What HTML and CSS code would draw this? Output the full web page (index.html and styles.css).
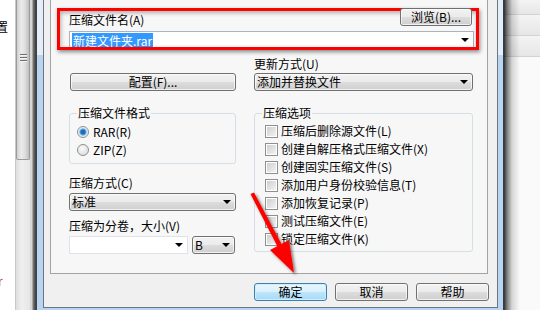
FILE: index.html
```html
<!DOCTYPE html>
<html lang="zh-CN">
<head>
  <meta charset="UTF-8">
  <title>压缩文件名和参数</title>
  <link rel="stylesheet" href="styles.css">
</head>
<body>
  <div class="behind">
    <span class="behind-text">置</span>
    <span class="behind-text orange">r</span>
  </div>
  <div class="scrollbar">
    <div class="thumb"><span class="grip"></span></div>
  </div>
  <div class="shade-left"></div>

  <div class="frame">
    <div class="client">
      <div class="tabpage">
        <div class="name-row">
          <span class="label">压缩文件名(A)</span>
          <button class="btn browse">浏览(B)...</button>
        </div>
        <div class="combo edit"><span class="sel">新建文件夹.rar</span><i class="arrow"></i></div>

        <div class="cols">
          <div class="col">
            <button class="btn profile">配置(F)...</button>
            <fieldset class="group format">
              <legend>压缩文件格式</legend>
              <div class="opt"><span class="radio on"></span>RAR(R)</div>
              <div class="opt"><span class="radio"></span>ZIP(Z)</div>
            </fieldset>
            <div class="label method">压缩方式(C)</div>
            <div class="combo list">标准<i class="arrow"></i></div>
            <div class="label volume">压缩为分卷，大小(V)</div>
            <div class="vol-row">
              <div class="combo edit size"><span></span><i class="arrow"></i></div>
              <div class="combo list unit">B<i class="arrow"></i></div>
            </div>
          </div>

          <div class="col">
            <div class="label update">更新方式(U)</div>
            <div class="combo list">添加并替换文件<i class="arrow"></i></div>
            <fieldset class="group options">
              <legend>压缩选项</legend>
              <div class="opt"><span class="check"></span>压缩后删除源文件(L)</div>
              <div class="opt"><span class="check"></span>创建自解压格式压缩文件(X)</div>
              <div class="opt"><span class="check"></span>创建固实压缩文件(S)</div>
              <div class="opt"><span class="check"></span>添加用户身份校验信息(T)</div>
              <div class="opt"><span class="check"></span>添加恢复记录(P)</div>
              <div class="opt"><span class="check"></span>测试压缩文件(E)</div>
              <div class="opt"><span class="check"></span>锁定压缩文件(K)</div>
            </fieldset>
          </div>
        </div>
      </div>

      <div class="buttons">
        <button class="btn default">确定</button>
        <button class="btn">取消</button>
        <button class="btn">帮助</button>
      </div>
    </div>
  </div>

  <div class="shade-right">
    <div class="row first"></div>
    <div class="row"></div>
    <div class="row"></div>
  </div>

  <!-- annotations drawn over the screenshot -->
  <div class="note-box"></div>
  <svg class="note-arrow" width="540" height="310" viewBox="0 0 540 310">
    <defs>
      <filter id="drop" x="-20%" y="-20%" width="140%" height="140%">
        <feDropShadow dx="2" dy="2" stdDeviation="1.5" flood-color="#000" flood-opacity="0.5"/>
      </filter>
    </defs>
    <g filter="url(#drop)" fill="#f00">
      <polygon points="250.5,194 254,192.5 282,245 278,247.5"/>
      <polygon points="294,273 270,250 289,240"/>
    </g>
  </svg>
</body>
</html>
```

FILE: styles.css
```css
* {
  margin: 0;
  padding: 0;
  box-sizing: border-box;
}
body {
  width: 540px;
  height: 310px;
  overflow: hidden;
  display: flex;
  position: relative;
  background: #fff;
  color: #000;
  font: 12px "Noto Sans CJK SC", "Liberation Sans", sans-serif;
}

/* window behind the dialog */
.behind {
  width: 15px;
  display: flex;
  flex-direction: column;
  justify-content: space-between;
  padding: 20px 0 22px;
  overflow: hidden;
}
.behind-text {
  line-height: 14px;
  margin-left: -4px;
}
.orange {
  color: #c0611c;
  margin-left: -2px;
}
.scrollbar {
  width: 15px;
  border-left: 1px solid #c9c9c9;
  background: linear-gradient(90deg, #dedede, #efefef 40%, #e6e6e6);
}
.thumb {
  height: 160px;
  border: 1px solid #9b9b9b;
  border-top: 0;
  border-radius: 0 0 2px 2px;
  background: linear-gradient(90deg, #d0d0d0, #ececec 35%, #dcdcdc 70%, #bdbdbd);
  padding-top: 54px;
  display: flex;
  justify-content: center;
}
.grip {
  width: 7px;
  height: 8px;
  background: repeating-linear-gradient(#6e6e6e 0 1px, #f4f4f4 1px 2px, transparent 2px 3px);
}
.shade-left {
  width: 7px;
  background: linear-gradient(90deg, #d6d6d6 0 2px, #7a7a7a 3px, #3a3a3a 6px, #4a4a4a);
}

/* dialog window */
.frame {
  width: 467px;
  padding: 0 5px 2px 6px;
  border-right: 1px solid #2f3b48;
  background: linear-gradient(#e4eef9 0 55px, #b8d4f1 55px);
}
.client {
  height: 309px;
  margin-top: -1px;
  border: 1px solid #6d7680;
  background: #f0f0f0;
}
.tabpage {
  width: 438px;
  height: 275px;
  margin: -1px 0 0 6px;
  border: 1px solid #a3a3a3;
  background: #f7f7f7;
  padding: 8px 13px 0 18px;
}
.label {
  line-height: 13px;
  white-space: nowrap;
}
.name-row {
  height: 18px;
  display: flex;
  justify-content: space-between;
  align-items: flex-end;
}

.btn {
  height: 18px;
  font: inherit;
  color: #000;
  line-height: 16px;
  border: 1px solid #707070;
  border-radius: 3px;
  background: linear-gradient(#f2f2f2, #ebebeb 50%, #dddddd 50%, #cfcfcf);
  box-shadow: inset 0 0 0 1px rgba(255, 255, 255, 0.7);
}
.browse {
  width: 72px;
  margin-right: 2px;
  position: relative;
  z-index: 2;
}
.profile {
  width: 166px;
  margin: 13px 0 0 1px;
}
.btn.default {
  border-color: #3c7fb1;
  background: linear-gradient(#eaf6fd, #d9f0fc 50%, #bee6fd 50%, #a7d9f5);
  box-shadow: inset 0 0 0 1px #cdeefd;
}

.combo {
  height: 18px;
  display: flex;
  align-items: center;
  justify-content: space-between;
  padding-left: 2px;
  line-height: 14px;
  white-space: nowrap;
}
.combo.edit {
  margin-top: 5px;
  background: #fff;
  border: 1px solid #a9b3be;
}
.combo.list {
  border: 1px solid #707070;
  border-radius: 3px;
  background: linear-gradient(#f2f2f2, #ebebeb 50%, #dddddd 50%, #cfcfcf);
  box-shadow: inset 0 0 0 1px rgba(255, 255, 255, 0.7);
}
.sel {
  background: #3399ff;
  color: #fff;
  padding: 0 1px;
  line-height: 15px;
}
.arrow {
  width: 0;
  height: 0;
  margin-right: 4px;
  border-left: 4px solid transparent;
  border-right: 4px solid transparent;
  border-top: 4px solid #000;
}

.cols {
  display: grid;
  grid-template-columns: 167px 219px;
  column-gap: 18px;
  margin-top: 11px;
}
.col {
  display: flex;
  flex-direction: column;
}
.update {
  line-height: 12px;
  margin: -2px 0 3px;
}

.group {
  margin-top: 15px;
  border: 1px solid #d5dfe5;
  border-radius: 3px;
  padding: 3px 0 4px 7px;
}
.group legend {
  padding: 0 1px;
  line-height: 14px;
}
.options {
  padding: 2px 0 3px 7px;
}
.opt {
  height: 18px;
  display: flex;
  align-items: center;
  white-space: nowrap;
  line-height: 14px;
}
.options .opt {
  padding-left: 3px;
}
.radio {
  width: 12px;
  height: 12px;
  margin-right: 4px;
  border: 1px solid #8e8f8f;
  border-radius: 50%;
  background: radial-gradient(circle at 40% 35%, #fbfbfb, #d6d6d6);
}
.radio.on {
  background: radial-gradient(circle, #1f6fb8 0 2px, #62a8e0 3px, #cfe6f8 4px, #f4f4f4 5px, #d6d6d6);
}
.check {
  width: 13px;
  height: 13px;
  margin-right: 3px;
  border: 1px solid #8e8f8f;
  background: linear-gradient(135deg, #cbcbcb, #f6f6f6);
  box-shadow: inset 0 0 0 1px #fff;
}

.method {
  margin-top: 12px;
  line-height: 14px;
}
.method + .combo {
  margin-top: 3px;
}
.volume {
  margin-top: 8px;
  line-height: 14px;
}
.vol-row {
  display: flex;
  gap: 4px;
  margin-top: 3px;
}
.combo.size {
  margin-top: 0;
  width: 119px;
  border-color: #dde3e9;
}
.unit {
  width: 43px;
}

.buttons {
  display: flex;
  justify-content: flex-end;
  gap: 8px;
  margin-top: 9px;
  padding-right: 8px;
}
.buttons .btn {
  width: 73px;
}

/* window to the right, under the dialog shadow */
.shade-right {
  flex: 1;
  position: relative;
  background: #fafafa;
}
.row {
  height: 21px;
  border-bottom: 1px solid #d3d3d3;
  background: linear-gradient(#f4f4f4, #e6e6e6);
}
.row.first {
  height: 15px;
}
.shade-right::after {
  content: "";
  position: absolute;
  top: 0;
  bottom: 0;
  left: 0;
  width: 16px;
  background: linear-gradient(90deg, rgba(0, 0, 0, 0.8), rgba(0, 0, 0, 0.5) 3px, rgba(0, 0, 0, 0.15) 8px, rgba(0, 0, 0, 0));
}

/* red annotations */
.note-box {
  position: absolute;
  left: 57px;
  top: 8px;
  width: 422px;
  height: 42px;
  border: 3px solid #f00;
  box-shadow: 1px 2px 4px rgba(0, 0, 0, 0.45), inset 1px 2px 4px rgba(0, 0, 0, 0.3);
}
.note-arrow {
  position: absolute;
  left: 0;
  top: 0;
  pointer-events: none;
}
```
